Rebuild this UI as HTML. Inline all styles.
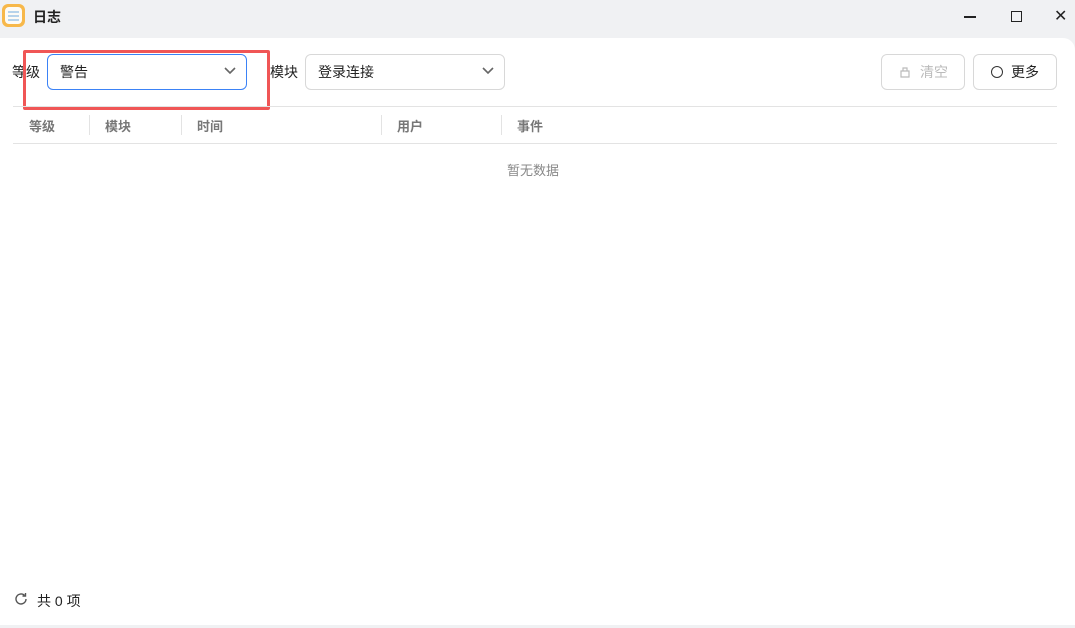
<!DOCTYPE html>
<html><head><meta charset="utf-8"><style>
*{box-sizing:border-box;margin:0;padding:0}
body{width:1075px;height:628px;background:#f0f1f3;font-family:"Liberation Sans","Noto Sans CJK SC",sans-serif;font-size:14px;color:#222;position:relative;overflow:hidden}
.abs{position:absolute}
.panel{left:0;top:38px;width:1075px;height:587px;background:#fff;border-top-right-radius:12px}
.sel{border:1px solid #d8d8d8;border-radius:6px;height:36px;background:#fff}
.hdr{color:#777;font-weight:bold;font-size:13px}
.sep{width:1px;height:20px;background:#e3e3e3;top:115px}
</style></head><body>
<div class="abs" style="left:2px;top:4px;width:23px;height:23px;border-radius:6px;background:#f7b84a"></div>
<div class="abs" style="left:5px;top:7px;width:17px;height:17px;border-radius:4px;background:#fdfbf6"></div>
<div class="abs" style="left:8px;top:11px;width:11px;height:2px;background:#b7d3ea;box-shadow:0 4px #b7d3ea,0 8px #b7d3ea"></div>
<div class="abs" style="left:33px;top:7px;font-weight:bold;font-size:14px">日志</div>
<div class="abs" style="left:964px;top:16px;width:12px;height:1.5px;background:#222"></div>
<div class="abs" style="left:1011px;top:11px;width:11px;height:11px;border:1.5px solid #222"></div>
<div class="abs" style="left:1054px;top:6px;font-size:16px;color:#222">✕</div>
<div class="abs panel"></div>
<div class="abs" style="left:12px;top:62px">等级</div>
<div class="abs sel" style="left:47px;top:54px;width:200px;border-color:#3b82f6"></div>
<div class="abs" style="left:60px;top:62px">警告</div>
<svg class="abs" style="left:223px;top:66px" width="14" height="10"><path d="M2 2l5 5 5-5" fill="none" stroke="#666" stroke-width="1.6"/></svg>
<div class="abs" style="left:23px;top:50px;width:247px;height:60px;border:3px solid #f05656;border-radius:2px"></div>
<div class="abs" style="left:270px;top:62px">模块</div>
<div class="abs sel" style="left:305px;top:54px;width:200px"></div>
<div class="abs" style="left:318px;top:62px">登录连接</div>
<svg class="abs" style="left:481px;top:66px" width="14" height="10"><path d="M2 2l5 5 5-5" fill="none" stroke="#666" stroke-width="1.6"/></svg>
<div class="abs sel" style="left:881px;top:54px;width:84px"></div>
<svg class="abs" style="left:898px;top:65px" width="14" height="14"><path d="M3 6h8v6H3z M5 6V3h4v3" fill="none" stroke="#bbb" stroke-width="1.2"/></svg>
<div class="abs" style="left:920px;top:62px;color:#bbb">清空</div>
<div class="abs sel" style="left:973px;top:54px;width:84px"></div>
<div class="abs" style="left:991px;top:66px;width:12px;height:12px;border:1.3px solid #333;border-radius:50%"></div>
<div class="abs" style="left:1011px;top:62px">更多</div>
<div class="abs" style="left:13px;top:106px;width:1044px;height:1px;background:#e3e3e3"></div>
<div class="abs" style="left:13px;top:143px;width:1044px;height:1px;background:#e3e3e3"></div>
<div class="abs hdr" style="left:29px;top:116px">等级</div>
<div class="abs sep" style="left:89px"></div>
<div class="abs hdr" style="left:105px;top:116px">模块</div>
<div class="abs sep" style="left:181px"></div>
<div class="abs hdr" style="left:197px;top:116px">时间</div>
<div class="abs sep" style="left:381px"></div>
<div class="abs hdr" style="left:397px;top:116px">用户</div>
<div class="abs sep" style="left:501px"></div>
<div class="abs hdr" style="left:517px;top:116px">事件</div>
<div class="abs" style="left:507px;top:160px;color:#888;font-size:13px">暂无数据</div>
<svg class="abs" style="left:13px;top:591px" width="16" height="16"><path d="M13 8a5 5 0 1 1-1.5-3.6" fill="none" stroke="#555" stroke-width="1.4"/><path d="M12.5 2v3h-3" fill="none" stroke="#555" stroke-width="1.4"/></svg>
<div class="abs" style="left:37px;top:591px">共 0 项</div>
</body></html>
